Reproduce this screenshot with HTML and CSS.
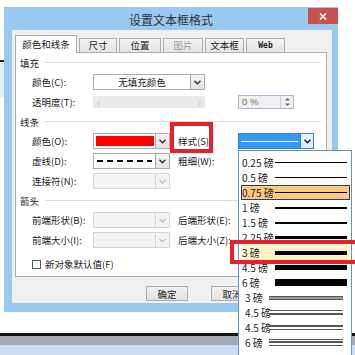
FILE: index.html
```html
<!DOCTYPE html>
<html lang="zh-CN">
<head>
<meta charset="UTF-8">
<title>设置文本框格式</title>
<link rel="stylesheet" href="styles.css">
</head>
<body>
<div class="screen">
  <div class="behind"></div>

  <div class="dialog">
    <div class="titlebar">
      <span></span>
      <div class="title">设置文本框格式</div>
      <div class="close">
        <svg width="8" height="7" viewBox="0 0 8 7"><path d="M1 0.5 L7 6.5 M7 0.5 L1 6.5" stroke="#fff" stroke-width="1.6" fill="none"/></svg>
      </div>
    </div>

    <div class="dlg-body">
      <div class="tabs">
        <div class="tab active t-lines">颜色和线条</div>
        <div class="tab t-size">尺寸</div>
        <div class="tab t-pos">位置</div>
        <div class="tab t-pic disabled">图片</div>
        <div class="tab t-box">文本框</div>
        <div class="tab t-web web">Web</div>
      </div>

      <div class="panel">
        <div class="group">填充</div>
        <div class="row">
          <span class="lbl">颜色(C):</span>
          <div class="combo wide">
            <span class="val centered">无填充颜色</span>
            <span class="drop"><svg width="7" height="5" viewBox="0 0 7 5"><polyline points="0.5,0.8 3.5,3.8 6.5,0.8" fill="none" stroke="#333" stroke-width="1.4"/></svg></span>
          </div>
        </div>
        <div class="row">
          <span class="lbl">透明度(T):</span>
          <div class="slider"><span>&lsaquo;</span><span>&rsaquo;</span></div>
          <div class="spin">
            <span class="val">0 %</span>
            <span class="spin-btn">
              <svg width="7" height="10" viewBox="0 0 7 10"><polygon points="3.5,1 6,3.5 1,3.5" fill="#666"/><polygon points="1,6.5 6,6.5 3.5,9" fill="#666"/></svg>
            </span>
          </div>
        </div>

        <div class="group">线条</div>
        <div class="row">
          <span class="lbl">颜色(O):</span>
          <div class="combo narrow">
            <span class="val red"></span>
            <span class="drop"><svg width="7" height="5" viewBox="0 0 7 5"><polyline points="0.5,0.8 3.5,3.8 6.5,0.8" fill="none" stroke="#333" stroke-width="1.4"/></svg></span>
          </div>
          <span class="lbl lbl2">样式(S):</span>
          <div class="combo style-combo">
            <span class="val picked"><i></i></span>
            <span class="drop"><svg width="7" height="5" viewBox="0 0 7 5"><polyline points="0.5,0.8 3.5,3.8 6.5,0.8" fill="none" stroke="#222" stroke-width="1.5"/></svg></span>
          </div>
        </div>
        <div class="row">
          <span class="lbl">虚线(D):</span>
          <div class="combo narrow">
            <span class="val"><i class="dashes"></i></span>
            <span class="drop"><svg width="7" height="5" viewBox="0 0 7 5"><polyline points="0.5,0.8 3.5,3.8 6.5,0.8" fill="none" stroke="#333" stroke-width="1.4"/></svg></span>
          </div>
          <span class="lbl lbl2">粗细(W):</span>
        </div>
        <div class="row">
          <span class="lbl">连接符(N):</span>
          <div class="combo narrow off">
            <span class="val"></span>
            <span class="drop"><svg width="7" height="5" viewBox="0 0 7 5"><polyline points="0.5,0.8 3.5,3.8 6.5,0.8" fill="none" stroke="#bbb" stroke-width="1.2"/></svg></span>
          </div>
        </div>

        <div class="group">箭头</div>
        <div class="row">
          <span class="lbl">前端形状(B):</span>
          <div class="combo narrow off">
            <span class="val"></span>
            <span class="drop"><svg width="7" height="5" viewBox="0 0 7 5"><polyline points="0.5,0.8 3.5,3.8 6.5,0.8" fill="none" stroke="#bbb" stroke-width="1.2"/></svg></span>
          </div>
          <span class="lbl lbl2">后端形状(E):</span>
        </div>
        <div class="row">
          <span class="lbl">前端大小(I):</span>
          <div class="combo narrow off">
            <span class="val"></span>
            <span class="drop"><svg width="7" height="5" viewBox="0 0 7 5"><polyline points="0.5,0.8 3.5,3.8 6.5,0.8" fill="none" stroke="#bbb" stroke-width="1.2"/></svg></span>
          </div>
          <span class="lbl lbl2">后端大小(Z):</span>
        </div>
        <div class="row check-row">
          <span class="box"></span>
          <span>新对象默认值(F)</span>
        </div>
      </div>

      <div class="buttons">
        <div class="btn">确定</div>
        <div class="btn">取消</div>
      </div>
    </div>
  </div>

  <div class="taskbar">
    <div class="tb-black"></div>
    <div class="tb-gray"></div>
    <div class="tb-blue"></div>
  </div>

  <!-- open weight list of the style combo -->
  <div class="weights">
    <div class="item"><span class="txt">0.25 磅</span><i class="ln w1"></i></div>
    <div class="item"><span class="txt">0.5 磅</span><i class="ln w1"></i></div>
    <div class="item hot"><span class="txt">0.75 磅</span><i class="ln w1"></i></div>
    <div class="item"><span class="txt">1 磅</span><i class="ln w2"></i></div>
    <div class="item"><span class="txt">1.5 磅</span><i class="ln w2"></i></div>
    <div class="item"><span class="txt">2.25 磅</span><i class="ln w3"></i></div>
    <div class="item sel"><span class="txt">3 磅</span><i class="ln w4"></i></div>
    <div class="item"><span class="txt">4.5 磅</span><i class="ln w5"></i></div>
    <div class="item"><span class="txt">6 磅</span><i class="ln w7"></i></div>
    <div class="item multi"><span class="txt">3 磅</span><i class="ln dbl3"></i></div>
    <div class="item multi"><span class="txt">4.5 磅</span><i class="ln thin-thick"></i></div>
    <div class="item multi"><span class="txt">4.5 磅</span><i class="ln thick-thin"></i></div>
    <div class="item multi"><span class="txt">6 磅</span><i class="ln triple"></i></div>
  </div>

  <!-- red marks drawn over the screenshot -->
  <div class="mark mark-style"></div>
  <div class="mark mark-weight"></div>
</div>
</body>
</html>
```

FILE: styles.css
```css
* {
    box-sizing: border-box;
}

body {
    margin: 0;
    background: #fff;
    font-family: "Noto Sans CJK SC", "Noto Sans", sans-serif;
    font-size: 9.5px;
    color: #1a1a1a;
}

.screen {
    position: relative;
    width: 355px;
    height: 355px;
    overflow: hidden;
}

.behind {
    position: absolute;
    left: 0;
    top: 60px;
    width: 4px;
    height: 37px;
    background: #e6f1fa;
    border-top: 2px solid #1a1a1a;
}

/* dialog frame */
.dialog {
    margin: 7px 0 0 4px;
    width: 334px;
    height: 305px;
    background: #99c8f0;
    padding: 0 6px 9px 8px;
    display: flex;
    flex-direction: column;
}

.titlebar {
    height: 23px;
    margin: 0 -6px 0 -8px;
    display: grid;
    grid-template-columns: 1fr auto 1fr;
}

.title {
    font-size: 12px;
    line-height: 26px;
    color: #333;
}

.close {
    justify-self: end;
    width: 30px;
    height: 16px;
    margin-top: 1px;
    background: #c75050;
    display: flex;
    align-items: center;
    justify-content: center;
}

.dlg-body {
    flex: 1;
    background: #f0f0f0;
    padding: 5px 5px 0 3px;
}

/* tabs */
.tabs {
    display: flex;
    align-items: flex-end;
    gap: 2px;
    height: 17px;
}

.tab {
    height: 14px;
    border: 1px solid #acacac;
    border-bottom: none;
    background: linear-gradient(#f3f3f3, #e3e3e3);
    display: flex;
    align-items: center;
    justify-content: center;
    line-height: 1;
}

.tab.active {
    height: 18px;
    margin-bottom: -1px;
    background: #fff;
    position: relative;
    z-index: 1;
}

.tab.disabled {
    color: #9a9a9a;
}

.tab.web {
    font-family: "DejaVu Sans Mono", monospace;
    font-weight: bold;
    font-size: 8px;
}

.t-lines { width: 62px; }
.t-size { width: 38px; }
.t-pos { width: 42px; }
.t-pic { width: 40px; }
.t-box { width: 39px; }
.t-web { width: 39px; }

/* tab page */
.panel {
    height: 225px;
    background: #fff;
    border: 1px solid #acacac;
}

.group {
    height: 19px;
    display: flex;
    align-items: center;
    padding: 0 5px 0 4px;
}

.group::after {
    content: "";
    flex: 1;
    height: 1px;
    margin-left: 6px;
    background: #dcdcdc;
}

.row {
    height: 20px;
    display: flex;
    align-items: center;
    padding-left: 16px;
}

.lbl {
    width: 61px;
    white-space: nowrap;
}

.lbl2 {
    width: 60px;
    margin-left: 8px;
}

.combo {
    height: 16px;
    border: 1px solid #acacac;
    background: #fff;
    display: flex;
}

.combo .val {
    flex: 1;
    display: flex;
    align-items: center;
}

.combo .val.centered {
    justify-content: center;
}

.combo .drop {
    width: 14px;
    border-left: 1px solid #acacac;
    background: linear-gradient(#f4f4f4, #e2e2e2);
    display: flex;
    align-items: center;
    justify-content: center;
}

.wide { width: 112px; }
.narrow { width: 77px; }

.combo .val.red {
    margin: 2px 1px 2px 2px;
    background: #ff0000;
}

.dashes {
    display: block;
    width: 100%;
    height: 2px;
    margin: 0 3px;
    background: repeating-linear-gradient(90deg, #000 0 6px, transparent 6px 10px);
}

.combo.off {
    border-color: #d6d6d6;
    background: #f3f3f3;
}

.combo.off .drop {
    border-left-color: #d6d6d6;
    background: #f3f3f3;
}

.style-combo {
    width: 76px;
    border-color: #3c7fb1;
}

.style-combo .val.picked {
    background: #3399ff;
    padding: 0 2px;
}

.style-combo .val.picked i {
    display: block;
    width: 100%;
    height: 1px;
    background: #fff;
}

.style-combo .drop {
    width: 13px;
    border-left-color: #3c7fb1;
    background: linear-gradient(#eaf5fd, #d8ecfb);
}

.slider {
    width: 112px;
    height: 12px;
    background: #e9e9e9;
    display: flex;
    justify-content: space-between;
    align-items: center;
    padding: 0 4px;
    color: #bdbdbd;
    font-size: 11px;
    line-height: 1;
}

.spin {
    width: 56px;
    height: 14px;
    margin-left: 33px;
    border: 1px solid #a9b7cf;
    background: #f0f0f0;
    display: flex;
}

.spin .val {
    flex: 1;
    padding-left: 3px;
    color: #6d6d6d;
    line-height: 12px;
    font-family: "Liberation Sans", sans-serif;
}

.spin-btn {
    width: 13px;
    border-left: 1px solid #c8d0dc;
    display: flex;
    align-items: center;
    justify-content: center;
}

.check-row {
    margin-top: 4px;
    gap: 4px;
}

.box {
    width: 9px;
    height: 9px;
    border: 1px solid #5a5a5a;
    background: #fff;
}

/* OK / Cancel */
.buttons {
    display: flex;
    gap: 23px;
    margin-top: 9px;
    padding-left: 131px;
}

.btn {
    width: 42px;
    height: 15px;
    border: 1px solid #acacac;
    background: linear-gradient(#f0f0f0, #e3e3e3);
    display: flex;
    align-items: center;
    justify-content: center;
}

/* desktop strips under the dialog */
.taskbar {
    margin-top: 21px;
}

.tb-black {
    height: 3px;
    background: #141414;
}

.tb-gray {
    height: 9px;
    background: #a6aab4;
}

.tb-blue {
    height: 10px;
    background: #cbdef3;
}

/* dropped-down weight list */
.weights {
    position: absolute;
    left: 238px;
    top: 150px;
    width: 114px;
    height: 215px;
    background: #fff;
    border: 1px solid #6d8fc7;
    padding-top: 4px;
    font-size: 10px;
    color: #222;
}

.item {
    height: 15px;
    margin: 0 1px 0 2px;
    border: 1px solid transparent;
    display: flex;
    align-items: center;
}

.item .txt {
    width: 33px;
    white-space: nowrap;
}

.item .ln {
    flex: 1;
    margin-right: 2px;
    background: #000;
}

.item.hot {
    background: #fdc97c;
    border-color: #1f3b8c;
}

.item.sel {
    background: #fdf3c6;
}

.w1 { height: 1px; }
.w2 { height: 2px; }
.w3 { height: 3px; }
.w4 { height: 4px; }
.w5 { height: 5px; }
.w7 { height: 7px; }

.item.multi .txt {
    width: 27px;
    padding-left: 3px;
}

.item.multi .ln {
    margin-right: 6px;
    background: #9a9a9a;
    border-top: 1px solid #555;
    border-bottom: 1px solid #555;
}

.dbl3 { height: 4px; }

.thin-thick {
    height: 5px;
    background: #fff !important;
    border-bottom-width: 2px !important;
}

.thick-thin {
    height: 5px;
    background: #fff !important;
    border-top-width: 2px !important;
}

.triple {
    height: 7px;
    background: linear-gradient(#fff 0 1px, #555 1px 3px, #fff 3px) !important;
}

/* red highlight boxes */
.mark {
    position: absolute;
    border: 4px solid #e8202a;
}

.mark-style {
    left: 170px;
    top: 122px;
    width: 43px;
    height: 31px;
}

.mark-weight {
    left: 230px;
    top: 240px;
    width: 130px;
    height: 24px;
}
```
